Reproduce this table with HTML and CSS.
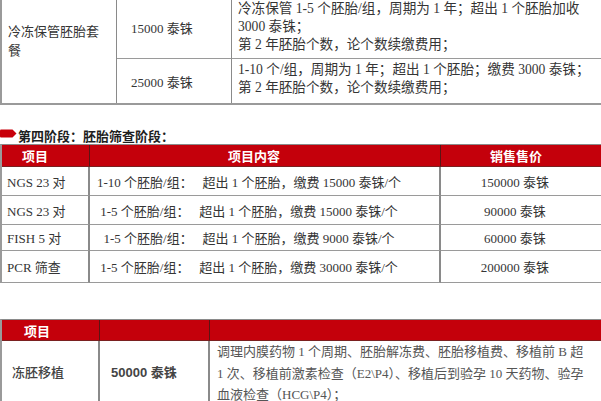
FILE: index.html
```html
<!DOCTYPE html>
<html lang="zh">
<head>
<meta charset="utf-8">
<link rel="stylesheet" href="styles.css">
</head>
<body>
<div class="page">
  <div class="t1">
    <div class="c t1-name">冷冻保管胚胎套<br>餐</div>
    <div class="c t1-price r1">15000 泰铢</div>
    <div class="c t1-desc r1">冷冻保管 1-5 个胚胎/组，周期为 1 年；超出 1 个胚胎加收<br>3000 泰铢；<br>第 2 年胚胎个数，论个数续缴费用；</div>
    <div class="c t1-price r2">25000 泰铢</div>
    <div class="c t1-desc r2b">1-10 个/组，周期为 1 年；超出 1 个胚胎；缴费 3000 泰铢；<br>第 2 年胚胎个数，论个数续缴费用；</div>
  </div>

  <div class="heading">
    <svg class="marker" width="17" height="9" viewBox="0 0 17 9"><path d="M1 0.5 H12.5 L16.5 4.5 L12.5 8.5 H1 Q0 8.5 0 7.5 V1.5 Q0 0.5 1 0.5 Z" fill="#c8000a"/></svg>
    <span>第四阶段：胚胎筛查阶段：</span>
  </div>

  <div class="t2">
    <div class="h h1">项目</div>
    <div class="h h2">项目内容</div>
    <div class="h h3">销售售价</div>

    <div class="c k">NGS 23 对</div>
    <div class="c d">1-10 个胚胎/组：&nbsp;&nbsp;&nbsp;超出 1 个胚胎，缴费 15000 泰铢/个</div>
    <div class="c p">150000 泰铢</div>

    <div class="c k">NGS 23 对</div>
    <div class="c d">&nbsp;1-5 个胚胎/组：&nbsp;&nbsp;&nbsp;超出 1 个胚胎，缴费 15000 泰铢/个</div>
    <div class="c p">90000 泰铢</div>

    <div class="c k">FISH 5 对</div>
    <div class="c d">&nbsp;&nbsp;1-5 个胚胎/组：&nbsp;&nbsp;&nbsp;超出 1 个胚胎，缴费 9000 泰铢/个</div>
    <div class="c p">60000 泰铢</div>

    <div class="c k">PCR 筛查</div>
    <div class="c d">&nbsp;1-5 个胚胎/组：&nbsp;&nbsp;&nbsp;超出 1 个胚胎，缴费 30000 泰铢/个</div>
    <div class="c p">200000 泰铢</div>
  </div>

  <div class="t3">
    <div class="h g1">项目</div>
    <div class="h g2"></div>
    <div class="h g3"></div>

    <div class="c m1">冻胚移植</div>
    <div class="c m2">50000 泰铢</div>
    <div class="c m3">调理内膜药物 1 个周期、胚胎解冻费、胚胎移植费、移植前 B 超<br>1 次、移植前激素检查（E2\P4）、移植后到验孕 10 天药物、验孕<br>血液检查（HCG\P4）；</div>
  </div>
</div>
</body>
</html>
```
FILE: styles.css
```css
* { box-sizing: border-box; }
html, body { margin: 0; padding: 0; background: #fff; }
body { overflow: hidden; width: 601px; height: 401px; }
.page {
  width: 601px;
  overflow: hidden;
  font-family: "Liberation Serif", "Noto Sans CJK SC", serif;
  font-size: 13px;
  color: #353535;
}
.c { white-space: nowrap; }

/* table 1 */
.t1 {
  display: grid;
  grid-template-columns: 115px 115px 430px;
  grid-template-rows: 59px 44px;
  width: 662px;
  border-left: 2px solid #9a9a9a;
  border-bottom: 2px solid #9a9a9a;
}
.t1-name {
  grid-row: 1 / 3;
  border-right: 1px solid #8a8a8a;
  padding: 22px 0 0 6px;
  line-height: 19px;
}
.t1-price {
  border-right: 1px solid #8a8a8a;
  padding-left: 14px;
  display: flex;
  align-items: center;
}
.t1-price.r1 { border-bottom: 1px solid #9a9a9a; align-items: flex-start; padding-top: 18px; }
.t1-desc { padding-left: 6px; line-height: 18px; font-size: 13.6px; }
.t1-desc.r1 { border-bottom: 1px solid #9a9a9a; padding-top: 0; }
.t1-desc.r2b { padding-top: 2px; }

/* heading */
.heading {
  display: flex;
  align-items: center;
  height: 16px;
  margin-top: 22px;
  font-weight: 700;
  color: #1e1e1e;
  font-size: 13px;
}
.marker { margin-right: 1px; margin-top: -3px; }
.heading span { font-family: "Noto Sans CJK SC", sans-serif; }

/* table 2 */
.t2 {
  display: grid;
  grid-template-columns: 88px 351px 180px;
  grid-template-rows: 22px 29px 29px 26px 32px;
  width: 619px;
  margin-top: 1px;
  border-left: 2px solid #9a9a9a;
  border-top: 1px solid #8a8a8a;
}
.h {
  background: #c4000b;
  color: #fff;
  font-weight: 700;
  font-family: "Noto Sans CJK SC", sans-serif;
  font-size: 13px;
  display: flex;
  align-items: center;
  border-bottom: 1px solid #7a2020;
}
.h1 { padding-left: 20px; border-right: 1px solid #5a1414; }
.h2 { padding-left: 138px; border-right: 1px solid #5a1414; }
.h3 { padding-left: 49px; }
.t2 .c {
  display: flex;
  align-items: center;
  border-bottom: 1px solid #9a9a9a;
}
.k { padding-left: 5px; border-right: 2px solid #8a8a8a; }
.d { padding-left: 7px; border-right: 2px solid #8a8a8a; }
.p { justify-content: center; padding-right: 32px; }

/* table 3 */
.t3 {
  display: grid;
  grid-template-columns: 98px 110px 420px;
  grid-template-rows: 21px 70px;
  width: 628px;
  margin-top: 36px;
  border-left: 2px solid #9a9a9a;
  border-top: 1px solid #8a8a8a;
}
.g1 { padding-left: 22px; border-right: 1px solid #5a1414; }
.g2 { border-right: 1px solid #5a1414; }
.m1 {
  border-right: 2px solid #8a8a8a;
  padding: 21px 0 0 10px;
  font-weight: 500;
  font-family: "Noto Sans CJK SC", sans-serif;
  color: #444;
}
.m2 {
  border-right: 2px solid #8a8a8a;
  padding: 21px 0 0 11px;
  font-weight: 700;
  font-family: "Liberation Sans", "Noto Sans CJK SC", sans-serif;
  color: #444;
}
.m3 {
  padding: 0 0 0 7px;
  line-height: 21.5px;
  color: #555;
}
```
